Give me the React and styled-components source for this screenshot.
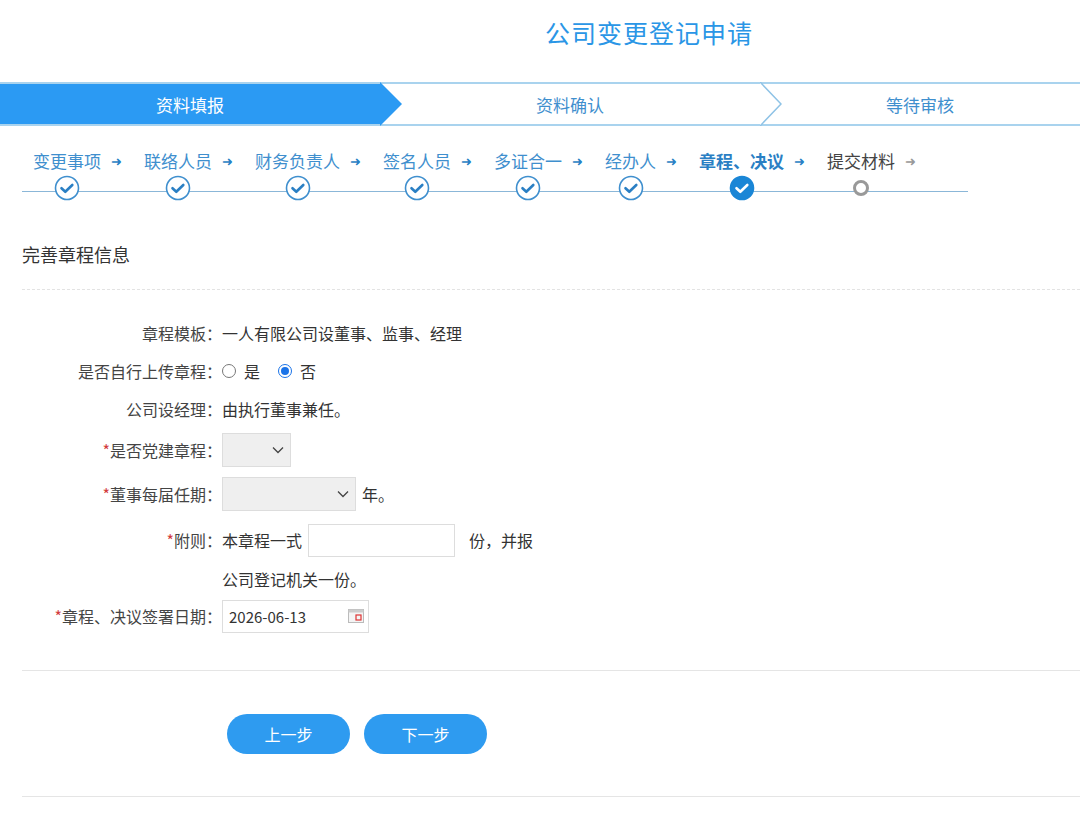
import React from 'react'
import styled, { createGlobalStyle } from 'styled-components'

const Global = createGlobalStyle`
  body { margin: 0; background: #fff; font-family: "Microsoft YaHei", "Noto Sans CJK SC", sans-serif; color: #333; }
`

const Page = styled.div`
  width: 1080px;
  height: 838px;
  overflow: hidden;
`

const Title = styled.h1`
  margin: 0;
  height: 82px;
  padding-left: 545px;
  padding-top: 14px;
  box-sizing: border-box;
  font-size: 25px;
  font-weight: normal;
  color: #2a96e6;
  letter-spacing: 1px;
`

const Bar = styled.div`
  display: flex;
  height: 44px;
  border-top: 2px solid #a9d3ee;
  border-bottom: 2px solid #a9d3ee;
  box-sizing: border-box;
`

const Phase = styled.div`
  position: relative;
  width: ${p => p.w}px;
  display: flex;
  align-items: center;
  justify-content: center;
  font-size: 17px;
  color: ${p => (p.active ? '#fff' : '#3f8fce')};
  background: ${p => (p.active ? '#2b9af3' : '#fff')};
`

const Chevron = styled.svg`
  position: absolute;
  right: -22px;
  top: -2px;
  z-index: 1;
`

const Steps = styled.div`
  position: relative;
  display: flex;
  margin: 24px 0 0 22px;
  width: 946px;
  padding-left: 11px;
  box-sizing: border-box;
  &::after {
    content: '';
    position: absolute;
    left: 0;
    right: 0;
    top: 41px;
    height: 1px;
    background: #8bb7d8;
  }
`

const Step = styled.div`
  display: flex;
  margin-right: ${p => p.gap}px;
`

const StepCol = styled.div`
  display: flex;
  flex-direction: column;
  align-items: center;
`

const StepLabel = styled.span`
  font-size: 17px;
  line-height: 22px;
  color: ${p => (p.state === 'todo' ? '#444' : '#3f8fce')};
  font-weight: ${p => (p.state === 'active' ? 'bold' : 'normal')};
  color: ${p => (p.state === 'active' ? '#2a7fc4' : p.state === 'todo' ? '#444' : '#3f8fce')};
`

const Arrow = styled.span`
  font-size: 13px;
  line-height: 22px;
  margin-left: 10px;
  color: ${p => (p.todo ? '#999' : '#2a7fc4')};
`

const Dot = styled.svg`
  position: relative;
  z-index: 1;
  margin-top: 3px;
`

const Section = styled.div`
  padding: 0 0 0 22px;
`

const SectionTitle = styled.div`
  font-size: 18px;
  color: #333;
  padding: 40px 0 22px;
  border-bottom: 1px dashed #e3e3e3;
`

const Form = styled.div`
  padding-top: 24px;
  padding-bottom: 32px;
  border-bottom: 1px solid #e5e5e5;
`

const Row = styled.div`
  display: flex;
  align-items: center;
  min-height: ${p => p.h || 38}px;
  font-size: 16px;
`

const Label = styled.div`
  width: 200px;
  text-align: right;
  color: #444;
  flex-shrink: 0;
  margin-right: 0px;
`

const Req = styled.span`
  color: #d23b3b;
`

const Value = styled.div`
  display: flex;
  align-items: center;
  color: #333;
  padding-left: 0;
`

const Radio = styled.span`
  display: inline-block;
  width: 14px;
  height: 14px;
  border-radius: 50%;
  border: 1px solid ${p => (p.on ? '#1a73e8' : '#777')};
  box-sizing: border-box;
  margin-right: 8px;
  position: relative;
  &::after {
    content: '';
    display: ${p => (p.on ? 'block' : 'none')};
    position: absolute;
    inset: 2px;
    border-radius: 50%;
    background: #1a73e8;
  }
`

const Select = styled.div`
  width: ${p => p.w}px;
  height: 34px;
  background: #efefef;
  border: 1px solid #ddd;
  box-sizing: border-box;
  display: flex;
  align-items: center;
  justify-content: flex-end;
  padding-right: 6px;
  margin-right: 6px;
`

const Input = styled.div`
  width: 147px;
  height: 33px;
  border: 1px solid #ddd;
  box-sizing: border-box;
  margin: 0 14px 0 6px;
`

const DateBox = styled.div`
  width: 147px;
  height: 33px;
  border: 1px solid #ddd;
  box-sizing: border-box;
  display: flex;
  align-items: center;
  justify-content: space-between;
  padding: 0 4px 0 6px;
  font-size: 15px;
`

const Buttons = styled.div`
  display: flex;
  gap: 14px;
  padding: 43px 0 42px 205px;
  border-bottom: 1px solid #e5e5e5;
`

const Button = styled.button`
  width: 123px;
  height: 40px;
  border: none;
  border-radius: 20px;
  background: #2e9bf0;
  color: #fff;
  font-size: 16px;
  font-family: inherit;
`

const Check = ({ active }) => (
  <Dot width="26" height="26" viewBox="0 0 26 26">
    <circle cx="13" cy="13" r="11.5" fill={active ? '#1a86d6' : '#fff'} stroke={active ? '#1a86d6' : '#3f8fce'} strokeWidth="1.6" />
    <path d="M7.5 13.2l3.8 3.6 7-6.8" fill="none" stroke={active ? '#fff' : '#2a7fc4'} strokeWidth="2.6" strokeLinecap="round" strokeLinejoin="round" />
  </Dot>
)

const Ring = () => (
  <Dot width="26" height="26" viewBox="0 0 26 26">
    <circle cx="13" cy="13" r="6.5" fill="#fff" stroke="#999" strokeWidth="3" />
  </Dot>
)

const Caret = () => (
  <svg width="12" height="8" viewBox="0 0 12 8"><path d="M1 1.5l5 5 5-5" fill="none" stroke="#444" strokeWidth="1.3" /></svg>
)

const steps = [
  ['变更事项', 'done', 22], ['联络人员', 'done', 22], ['财务负责人', 'done', 22], ['签名人员', 'done', 22],
  ['多证合一', 'done', 22], ['经办人', 'done', 22], ['章程、决议', 'active', 22], ['提交材料', 'todo', 0],
]

export default function App() {
  return (
    <Page>
      <Global />
      <Title>公司变更登记申请</Title>
      <Bar>
        <Phase w={380} active>
          资料填报
          <Chevron width="22" height="44" viewBox="0 0 22 44"><path d="M0 0L22 22L0 44Z" fill="#2b9af3" /></Chevron>
        </Phase>
        <Phase w={380}>
          资料确认
          <Chevron width="22" height="44" viewBox="0 0 22 44"><path d="M0 0L21 22L0 44" fill="#fff" stroke="#8fc3e6" strokeWidth="1.5" /></Chevron>
        </Phase>
        <Phase w={320}>等待审核</Phase>
      </Bar>
      <Steps>
        {steps.map(([t, s, g]) => (
          <Step key={t} gap={g}>
            <StepCol>
              <StepLabel state={s}>{t}</StepLabel>
              {s === 'todo' ? <Ring /> : <Check active={s === 'active'} />}
            </StepCol>
            <Arrow todo={s === 'todo'}>➜</Arrow>
          </Step>
        ))}
      </Steps>
      <Section>
        <SectionTitle>完善章程信息</SectionTitle>
        <Form>
          <Row><Label>章程模板：</Label><Value>一人有限公司设董事、监事、经理</Value></Row>
          <Row>
            <Label>是否自行上传章程：</Label>
            <Value><Radio />是<span style={{ width: 18 }} /><Radio on />否</Value>
          </Row>
          <Row><Label>公司设经理：</Label><Value>由执行董事兼任。</Value></Row>
          <Row h={44}><Label><Req>*</Req>是否党建章程：</Label><Value><Select w={69}><Caret /></Select></Value></Row>
          <Row h={44}><Label><Req>*</Req>董事每届任期：</Label><Value><Select w={134}><Caret /></Select>年。</Value></Row>
          <Row h={48}><Label><Req>*</Req>附则：</Label><Value>本章程一式<Input />份，并报</Value></Row>
          <Row h={30}><Label /><Value>公司登记机关一份。</Value></Row>
          <Row h={44}>
            <Label><Req>*</Req>章程、决议签署日期：</Label>
            <Value>
              <DateBox>
                2026-06-13
                <svg width="16" height="14" viewBox="0 0 16 14">
                  <rect x="0.5" y="0.5" width="15" height="13" fill="#f4f4f4" stroke="#bbb" />
                  <rect x="0.5" y="0.5" width="15" height="3" fill="#ccc" />
                  <rect x="8" y="6" width="5" height="5" fill="none" stroke="#d33" strokeWidth="1.2" />
                </svg>
              </DateBox>
            </Value>
          </Row>
        </Form>
        <Buttons>
          <Button>上一步</Button>
          <Button>下一步</Button>
        </Buttons>
      </Section>
    </Page>
  )
}
